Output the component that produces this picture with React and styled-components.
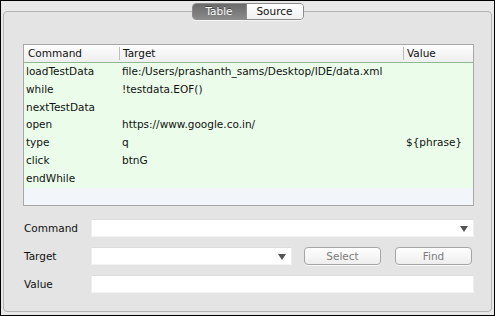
import React, { useState } from 'react';
import styled, { createGlobalStyle } from 'styled-components';

const GlobalStyle = createGlobalStyle`
  html, body {
    margin: 0;
    padding: 0;
    background: #e8e8e8;
  }
  body {
    font-family: "DejaVu Sans", "Liberation Sans", sans-serif;
    font-size: 10.5px;
    color: #111;
  }
`;

const Window = styled.div`
  width: 495px;
  height: 316px;
  box-sizing: border-box;
  border: 1px solid #000;
  background: #e8e8e8;
  padding: 1px 2px 3px 2px;
  display: flex;
  flex-direction: column;
`;

const TabBar = styled.div`
  position: relative;
  z-index: 1;
  align-self: center;
  display: flex;
  height: 15px;
  margin-top: 1px;
  border: 1px solid #8c8c8c;
  border-radius: 4px;
  overflow: hidden;
  box-shadow: 0 1px 0 rgba(255, 255, 255, 0.6);
`;

const Tab = styled.button`
  font: inherit;
  border: none;
  margin: 0;
  padding: 0;
  width: ${(p) => p.$width}px;
  line-height: 15px;
  cursor: pointer;
  color: ${(p) => (p.$active ? '#fff' : '#111')};
  background: ${(p) =>
    p.$active
      ? 'linear-gradient(#6a6a6a, #8a8a8a)'
      : 'linear-gradient(#ffffff, #f0f0f0)'};
  text-shadow: ${(p) => (p.$active ? '0 -1px 0 #444' : 'none')};
  & + & {
    border-left: 1px solid #8c8c8c;
  }
`;

const Panel = styled.div`
  flex: 1;
  margin-top: -9px;
  border: 1px solid #b4b4b4;
  border-radius: 4px;
  background: #e4e4e4;
  padding: 32px 17px 0 19px;
  display: flex;
  flex-direction: column;
`;

const Table = styled.div`
  border: 1px solid #a8a8a8;
  background: #f2f5fa;
  height: 160px;
  display: flex;
  flex-direction: column;
`;

const cols = '95px 284px 1fr';

const HeaderRow = styled.div`
  display: grid;
  grid-template-columns: ${cols};
  height: 17px;
  background: linear-gradient(#fdfdfd, #efefef);
  border-bottom: 1px solid #8fb98f;
`;

const HeaderCell = styled.div`
  line-height: 17px;
  padding-left: 4px;
  position: relative;
  & + &::before {
    content: '';
    position: absolute;
    left: 0;
    top: 2px;
    bottom: 2px;
    border-left: 1px solid #bdbdbd;
  }
`;

const Row = styled.div`
  display: grid;
  grid-template-columns: ${cols};
  height: 17.8px;
  background: #ebfdea;
`;

const Cell = styled.div`
  line-height: 17.8px;
  padding-left: ${(p) => (p.$first ? 2 : 3)}px;
  white-space: nowrap;
  overflow: hidden;
`;

const Form = styled.div`
  display: flex;
  flex-direction: column;
  gap: 10px;
  margin-top: 13px;
`;

const FormRow = styled.div`
  display: flex;
  align-items: center;
  height: 18px;
`;

const Label = styled.label`
  width: 67px;
  padding-left: 1px;
`;

const Field = styled.div`
  position: relative;
  width: ${(p) => (p.$width ? `${p.$width}px` : 'auto')};
  flex: ${(p) => (p.$width ? 'none' : 1)};
  height: 18px;
  box-sizing: border-box;
  background: #fff;
  border-top: 1px solid #dcdcdc;
  border-left: 1px solid #ededed;
  border-right: 1px solid #ededed;
  border-bottom: 1px solid #f4f4f4;
`;

const Arrow = styled.span`
  position: absolute;
  right: 5px;
  top: 6px;
  width: 0;
  height: 0;
  border-left: 4px solid transparent;
  border-right: 4px solid transparent;
  border-top: 6px solid #555;
`;

const Button = styled.button`
  font: inherit;
  color: #7c7c7c;
  width: 77px;
  height: 18px;
  padding: 0;
  margin-left: ${(p) => p.$gap}px;
  border: 1px solid #a6a6a6;
  border-radius: 4px;
  background: linear-gradient(#ffffff, #eeeeee);
  box-shadow: 0 1px 0 rgba(255, 255, 255, 0.7);
`;

const commands = [
  ['loadTestData', 'file:/Users/prashanth_sams/Desktop/IDE/data.xml', ''],
  ['while', '!testdata.EOF()', ''],
  ['nextTestData', '', ''],
  ['open', 'https://www.google.co.in/', ''],
  ['type', 'q', '${phrase}'],
  ['click', 'btnG', ''],
  ['endWhile', '', ''],
];

export default function App() {
  const [tab, setTab] = useState('table');

  return (
    <>
      <GlobalStyle />
      <Window>
        <TabBar>
          <Tab $width={53} $active={tab === 'table'} onClick={() => setTab('table')}>
            Table
          </Tab>
          <Tab $width={57} $active={tab === 'source'} onClick={() => setTab('source')}>
            Source
          </Tab>
        </TabBar>
        <Panel>
          <Table>
            <HeaderRow>
              <HeaderCell>Command</HeaderCell>
              <HeaderCell>Target</HeaderCell>
              <HeaderCell>Value</HeaderCell>
            </HeaderRow>
            {commands.map(([cmd, target, value], i) => (
              <Row key={i}>
                <Cell $first>{cmd}</Cell>
                <Cell>{target}</Cell>
                <Cell>{value}</Cell>
              </Row>
            ))}
          </Table>
          <Form>
            <FormRow>
              <Label>Command</Label>
              <Field>
                <Arrow />
              </Field>
            </FormRow>
            <FormRow>
              <Label>Target</Label>
              <Field $width={201}>
                <Arrow />
              </Field>
              <Button $gap={12}>Select</Button>
              <Button $gap={14}>Find</Button>
            </FormRow>
            <FormRow>
              <Label>Value</Label>
              <Field />
            </FormRow>
          </Form>
        </Panel>
      </Window>
    </>
  );
}
